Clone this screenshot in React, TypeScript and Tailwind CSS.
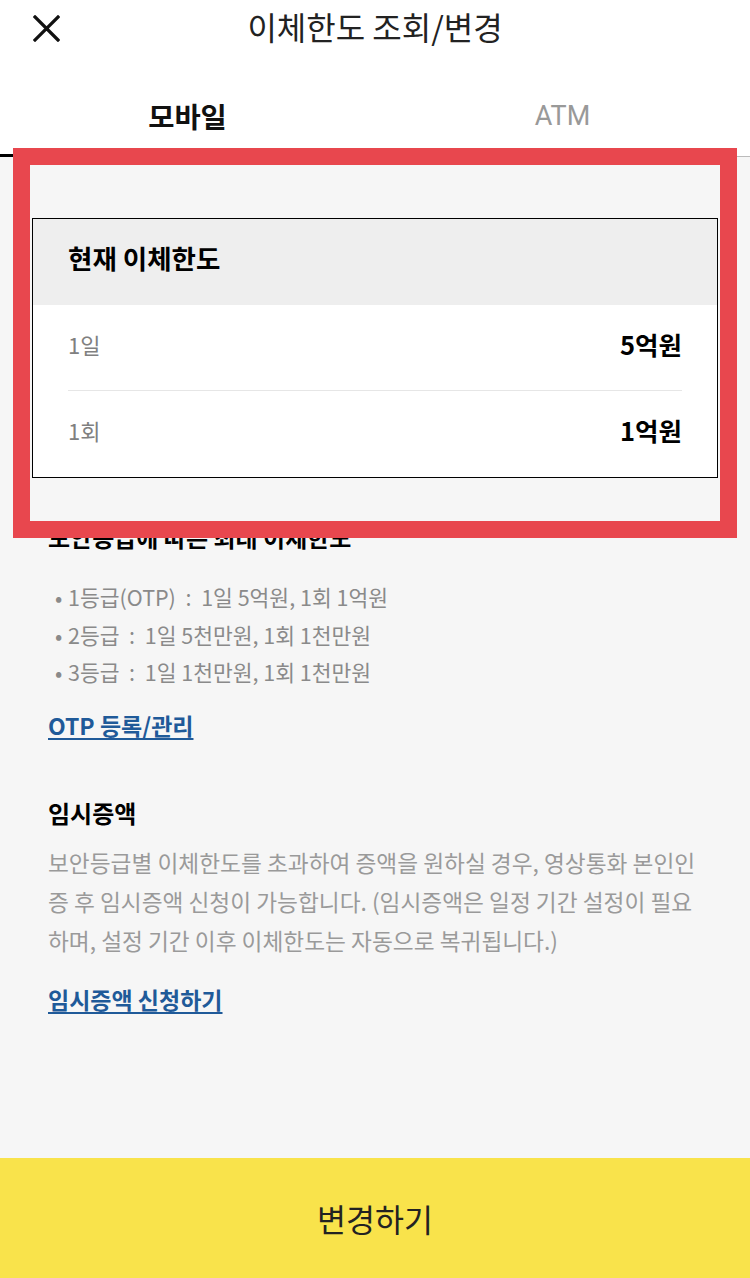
import React from "react";

const bullets = [
  "1등급(OTP) : 1일 5억원, 1회 1억원",
  "2등급 : 1일 5천만원, 1회 1천만원",
  "3등급 : 1일 1천만원, 1회 1천만원",
];

function LimitRow({ label, value, divider }: { label: string; value: string; divider?: boolean }) {
  return (
    <div
      className={`flex items-center justify-between pb-[8px] ${divider ? "h-[86px] border-b border-[#e6e6e6]" : "h-[86px]"}`}
    >
      <span className="text-[22px] text-[#808080] leading-[30px]">{label}</span>
      <span className="text-[25.5px] font-bold text-black leading-[30px]">{value}</span>
    </div>
  );
}

export default function App() {
  return (
    <div className="relative w-[750px] h-[1278px] bg-[#f6f6f6] flex flex-col font-['Noto_Sans_CJK_KR',sans-serif] overflow-hidden">
      {/* 상단 헤더 */}
      <header className="h-[56px] bg-white grid grid-cols-[1fr_auto_1fr] items-center">
        <div className="pl-[33px] flex items-center">
          <svg width="27" height="27" viewBox="0 0 27 27" fill="none">
            <path d="M2 2L25 25M25 2L2 25" stroke="#111" strokeWidth="3.2" strokeLinecap="square" />
          </svg>
        </div>
        <h1 className="text-[32px] font-normal text-[#222] leading-[36px] -mt-[5px]">이체한도 조회/변경</h1>
        <div />
      </header>

      {/* 탭 */}
      <div className="h-[101px] bg-white flex">
        <div className="flex-1 flex justify-center pt-[43px] border-b-[3px] border-black">
          <span className="text-[28.5px] font-bold text-[#111] leading-[34px]">모바일</span>
        </div>
        <div className="flex-1 flex justify-center pt-[43px] border-b border-[#bbbbbb]">
          <span className="text-[27px] text-[#999] leading-[34px] font-['Roboto',sans-serif]">ATM</span>
        </div>
      </div>

      {/* 본문 */}
      <main className="flex-1 pt-[61px]">
        <section className="mx-[32px] border border-black bg-white">
          <div className="h-[86px] bg-[#eeeeee] px-[35px] flex items-center">
            <h2 className="text-[26.5px] font-bold text-black leading-[30px] -mt-[8px]">현재 이체한도</h2>
          </div>
          <div className="px-[35px]">
            <LimitRow label="1일" value="5억원" divider />
            <LimitRow label="1회" value="1억원" />
          </div>
        </section>

        <div className="px-[48px]">
          <h3 className="mt-[44px] text-[24px] font-bold text-black leading-[30px]">보안등급에 따른 최대 이체한도</h3>
          <ul className="mt-[26px]">
            {bullets.map((b) => (
              <li key={b} className="flex text-[21.5px] text-[#8a8a8a] leading-[37.5px]">
                <span className="w-[20px] pl-[7px]">•</span>
                <span className="whitespace-pre">{b.replace(" : ", "  :  ")}</span>
              </li>
            ))}
          </ul>
          <a href="#" className="inline-block mt-[19px] text-[23px] font-bold text-[#1f5a99] leading-[30px] underline decoration-2 underline-offset-[3px]">
            OTP 등록/관리
          </a>

          <h3 className="mt-[58px] text-[24px] font-bold text-black leading-[30px]">임시증액</h3>
          <p className="mt-[15px] text-[22.7px] text-[#9a9a9a] leading-[39px] whitespace-nowrap">
            보안등급별 이체한도를 초과하여 증액을 원하실 경우, 영상통화 본인인
            <br />
            증 후 임시증액 신청이 가능합니다. (임시증액은 일정 기간 설정이 필요
            <br />
            하며, 설정 기간 이후 이체한도는 자동으로 복귀됩니다.)
          </p>
          <a href="#" className="inline-block mt-[24px] text-[23px] font-bold text-[#1f5a99] leading-[30px] underline decoration-2 underline-offset-[3px]">
            임시증액 신청하기
          </a>
        </div>
      </main>

      {/* 하단 버튼 */}
      <button className="h-[120px] w-full bg-[#f9e34b] flex items-center justify-center">
        <span className="text-[31.5px] text-[#222] leading-[36px]">변경하기</span>
      </button>

      {/* 강조 표시 (빨간 박스) */}
      <div className="absolute left-[13px] top-[148px] w-[724px] h-[390px] border-[17px] border-[#e8474e] pointer-events-none" />
    </div>
  );
}
